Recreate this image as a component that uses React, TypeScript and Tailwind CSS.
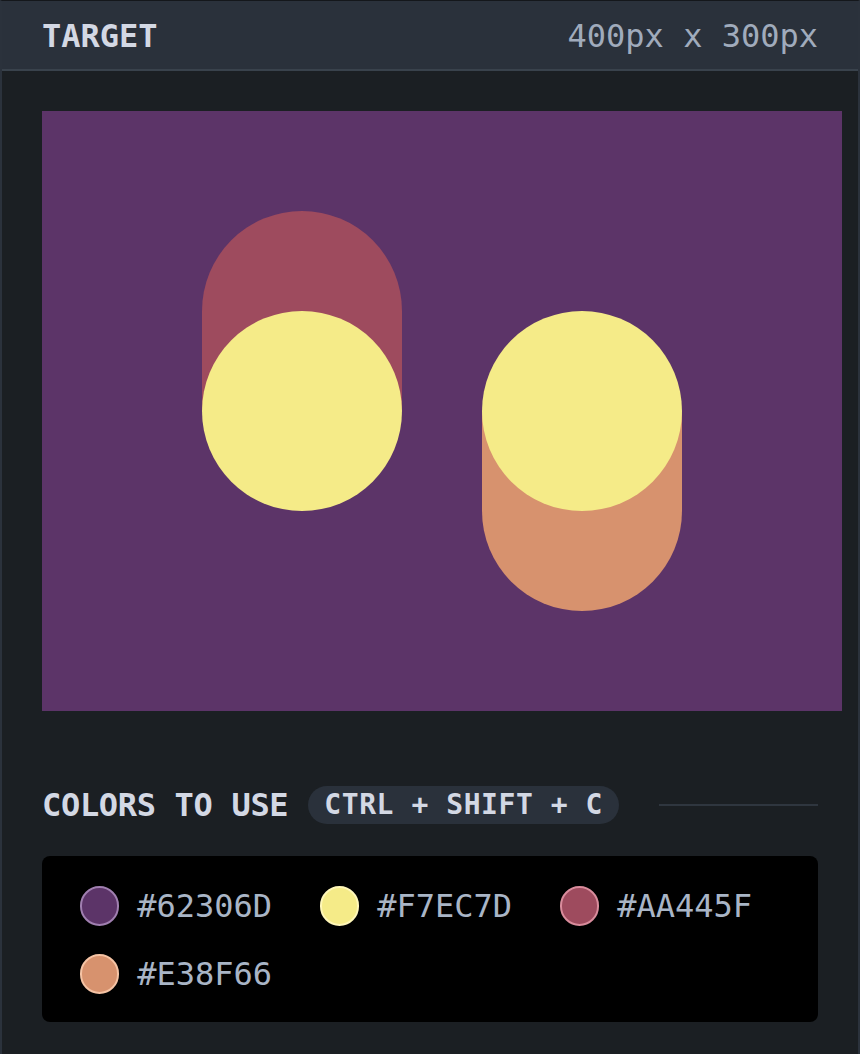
import React from 'react';

const palette = [
  { hex: '#62306D', fill: 'bg-[#5c3468]', ring: 'border-[#a07fb0]' },
  { hex: '#F7EC7D', fill: 'bg-[#f5eb88]', ring: 'border-[#fff7b8]' },
  { hex: '#AA445F', fill: 'bg-[#9e4b5e]', ring: 'border-[#d98c9c]' },
  { hex: '#E38F66', fill: 'bg-[#d7926e]', ring: 'border-[#f5c3a4]' },
];

const mono = { fontFamily: '"DejaVu Sans Mono", "Liberation Mono", monospace' };

export default function App() {
  return (
    <div className="w-[860px] h-[1054px] flex flex-col bg-[#1b1f23] border-x-2 border-t border-x-[#2b323c] border-t-[#14171b]" style={mono}>
      {/* header */}
      <div className="h-[70px] shrink-0 flex items-center justify-between px-10 pt-[2px] bg-[#2a313b] border-b-2 border-[#39424c]">
        <span className="text-[32px] font-bold text-[#d3d8e4]">TARGET</span>
        <span className="text-[32px] text-[#a0abbc]">400px x 300px</span>
      </div>

      <div className="flex flex-col px-10 pt-10">
        {/* target canvas, 400x300 at 2x */}
        <div className="relative w-[800px] h-[600px] bg-[#5c3468] overflow-hidden">
          <div className="absolute left-[160px] top-[100px] w-[200px] h-[200px] rounded-t-full bg-[#9e4b5e]" />
          <div className="absolute left-[160px] top-[200px] w-[200px] h-[200px] rounded-full bg-[#f5eb88]" />
          <div className="absolute left-[440px] top-[300px] w-[200px] h-[200px] rounded-b-full bg-[#d7926e]" />
          <div className="absolute left-[440px] top-[200px] w-[200px] h-[200px] rounded-full bg-[#f5eb88]" />
        </div>

        {/* colors heading */}
        <div className="flex items-center mt-[75px] h-[38px]">
          <span className="text-[32px] font-bold text-[#d3d8e4] tracking-[-0.01em]">COLORS TO USE</span>
          <span className="ml-5 h-[38px] flex items-center px-4 rounded-full bg-[#2a313b] text-[28px] font-bold text-[#d3d8e4] tracking-[0.02em]">
            CTRL + SHIFT + C
          </span>
          <div className="flex-1 ml-10 h-[2px] bg-[#2f363f]" />
        </div>

        {/* palette */}
        <div className="mt-8 w-[776px] rounded-lg bg-black pl-[38px] pr-4 pt-[30px] pb-[28px] flex flex-wrap gap-x-12 gap-y-7">
          {palette.map((c) => (
            <div key={c.hex} className="flex items-center w-[192px] h-10">
              <div className={`w-10 h-10 rounded-full border-2 ${c.fill} ${c.ring}`} />
              <span className="ml-[18px] text-[32px] text-[#a9b5c6]">{c.hex}</span>
            </div>
          ))}
        </div>
      </div>
    </div>
  );
}
